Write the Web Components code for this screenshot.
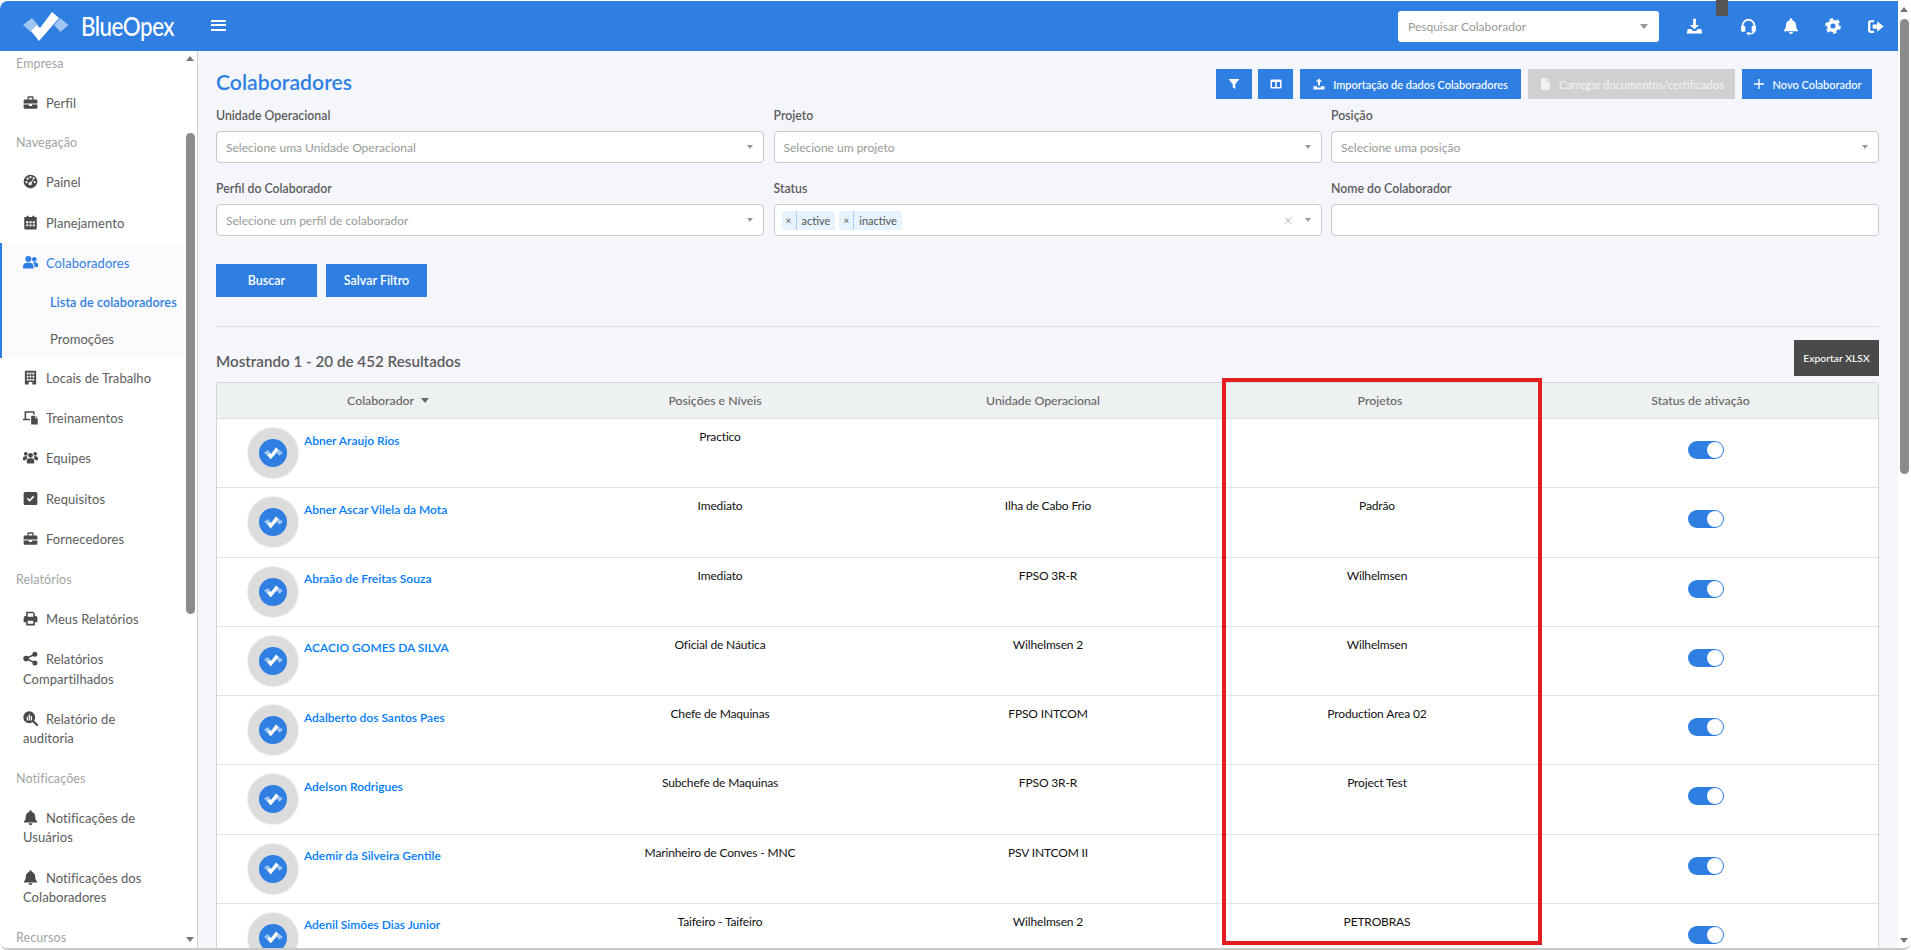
<!DOCTYPE html>
<html lang="pt-BR">
<head>
<meta charset="utf-8">
<title>Colaboradores</title>
<style>
  html, body { margin: 0; height: 100%; overflow: hidden; background: #fff; }
  body { font-family: Lato, "Noto Sans", "Liberation Sans", sans-serif; }
</style>
</head>
<body>
<bo-app></bo-app>
<script>
const BLUE = '#2f7fe3';

const dot = (x, y, r) => `M${x - r} ${y}a${r} ${r} 0 1 0 ${2 * r} 0a${r} ${r} 0 1 0 ${-2 * r} 0z`;

// Icons drawn on a 24x24 grid
const ICONS = {
  briefcase: `<path fill-rule="evenodd" d="M9 2h6a2 2 0 0 1 2 2v3h4a2 2 0 0 1 2 2v4.5H1V9a2 2 0 0 1 2-2h4V4a2 2 0 0 1 2-2zm0 2.5V7h6V4.5H9zM1 15h8.5v2.5h5V15H23v5a2 2 0 0 1-2 2H3a2 2 0 0 1-2-2z"/>`,
  gauge: `<path fill-rule="evenodd" d="${dot(12, 12, 11)}${dot(5.5, 13, 1.7)}${dot(7.5, 7.5, 1.7)}${dot(12, 5, 1.7)}${dot(17, 7, 1.7)}${dot(18.5, 13, 1.7)}${dot(11.5, 15.5, 2.6)}"/><path d="M12 15l4-6" stroke="#fff" stroke-width="1.6"/>`,
  calendar: `<path fill-rule="evenodd" d="M6 1h3v2h6V1h3v2h3a1 1 0 0 1 1 1v17a2 2 0 0 1-2 2H4a2 2 0 0 1-2-2V4a1 1 0 0 1 1-1h3zM5 10v3h3.5v-3zm5.2 0v3h3.6v-3zm5.3 0v3H19v-3zM5 15v3h3.5v-3zm5.2 0v3h3.6v-3zm5.3 0v3H19v-3z"/>`,
  friends: `<circle cx="8.5" cy="6.5" r="4.8"/><path d="M0 21.5V19c0-4 3-6.5 6-6.5h5c3 0 6 2.500 6 6.500v2.500z"/><circle cx="18" cy="6.800" r="3.800"/><path d="M15.500 12c1-.4 2-.4 3.500-.4 3 0 5.500 2 5.500 5.400v2h-6c0-3-1-5.500-3-7z"/>`,
  building: `<path fill-rule="evenodd" d="M4 1h16a1 1 0 0 1 1 1v21h-6v-4H9v4H3V2a1 1 0 0 1 1-1zM6 4v3h3V4zm4.500 0v3h3V4zM15 4v3h3V4zM6 9v3h3V9zm4.500 0v3h3V9zM15 9v3h3V9zM6 14v3h3v-3zm4.500 0v3h3v-3zM15 14v3h3v-3z"/>`,
  laptopfile: `<path d="M3 2h14a1.500 1.500 0 0 1 1.500 1.500V7H16V4.500H5V14h6v2.500H0V15a1 1 0 0 1 1-1h1.500V3.500A1.500 1.500 0 0 1 3 2z"/><path d="M13 9h6v4h4.500v10H13zM20 9l3.500 3H20z"/>`,
  users: `<circle cx="12" cy="8.500" r="3.800"/><circle cx="4.500" cy="6" r="3"/><circle cx="19.500" cy="6" r="3"/><path d="M6 20v-3c0-2.500 2-4 4-4h4c2 0 4 1.500 4 4v3a1.500 1.500 0 0 1-1.500 1.500h-9A1.500 1.500 0 0 1 6 20z"/><path d="M0 15v-2c0-1.500 1.500-3 3-3h3c.3 0 .5 0 .8.200-.5 1-.3 2 .200 2.800-1.500.8-2.500 2-3 3.500H1a1 1 0 0 1-1-1.500zM24 15v-2c0-1.500-1.500-3-3-3h-3l-.8.200c.5 1 .3 2-.200 2.800 1.500.8 2.500 2 3 3.500h3a1 1 0 0 0 1-1.500z"/>`,
  check: `<path fill-rule="evenodd" d="M3.500 1.500h17a2.500 2.500 0 0 1 2.500 2.500v16a2.500 2.500 0 0 1-2.500 2.500h-17A2.500 2.500 0 0 1 1 20V4a2.500 2.500 0 0 1 2.500-2.500zM6 12.500l1.800-1.800 2.700 2.700 5.700-5.700 1.800 1.800-7.500 7.500z"/>`,
  print: `<path fill-rule="evenodd" d="M5 1h11l3 3v4h1a3 3 0 0 1 3 3v7h-4v5H5v-5H1v-7a3 3 0 0 1 3-3h1zm2.500 2.500V9h9V3.500zM7.500 15.500V20.500h9v-5z"/>`,
  share: `<circle cx="5" cy="12" r="4.500"/><circle cx="19" cy="5" r="4"/><circle cx="19" cy="19" r="4"/><path d="M19 5L5 12l14 7" fill="none" stroke="currentColor" stroke-width="2.500"/>`,
  audit: `<path fill-rule="evenodd" d="${dot(10, 10, 9.500)}M6 9h2v6H6zM9.200 5.500h2V15h-2zM12.500 8h2v7h-2z"/><path d="M16 16l6.500 6.500" stroke="currentColor" stroke-width="3.500" stroke-linecap="round"/>`,
  bell: `<path d="M12 .5a2 2 0 0 0-2 2v.7C6.500 4 4.500 7 4.500 10.500c0 5-1.700 6.500-3 7.800V20h21v-1.700c-1.300-1.300-3-2.800-3-7.800 0-3.500-2-6.500-5.500-7.300v-.7a2 2 0 0 0-2-2zM9 21h6a3 3 0 0 1-6 0z"/>`,
  download: `<path d="M10 1h4v9h4.500L12 16 5.500 10H10z"/><path d="M2.500 15.500H7l3 3h4l3-3h4.500L23 22H1z"/>`,
  headset: `<path d="M3.500 14V11a8.500 8.500 0 0 1 17 0v3" fill="none" stroke="currentColor" stroke-width="2.600"/><rect x="1.500" y="11" width="6" height="8.500" rx="2"/><rect x="16.500" y="11" width="6" height="8.500" rx="2"/><path d="M20 18c0 3-2 4-4.500 4H11" fill="none" stroke="currentColor" stroke-width="2"/><rect x="9.500" y="20" width="5" height="3.500" rx="1.700"/>`,
  gear: `<circle cx="12" cy="12" r="6.500" fill="none" stroke="currentColor" stroke-width="5.400"/><circle cx="12" cy="12" r="10" fill="none" stroke="currentColor" stroke-width="3.600" stroke-dasharray="5.200 5.270"/>`,
  signout: `<path d="M10 3H5a3.500 3.500 0 0 0-3.500 3.500v11A3.500 3.500 0 0 0 5 21h5v-3H5.500a.8.800 0 0 1-.8-.800V6.800a.8.800 0 0 1 .8-.800H10z"/><path d="M14.500 4.500L23.500 12l-9 7.500V15H8V9h6.500z"/>`,
  filter: `<path d="M1 2h22l-8.500 10.500V22l-5-3.500v-6z"/>`,
  columns: `<path fill-rule="evenodd" d="M2.500 3h19A1.500 1.500 0 0 1 23 4.500v15a1.500 1.500 0 0 1-1.500 1.500h-19A1.500 1.500 0 0 1 1 19.500v-15A1.500 1.500 0 0 1 2.500 3zM4 8v10h6.500V8zm9.500 0v10H20V8z"/>`,
  upload: `<path d="M10 15V7.500H5.500L12 1l6.500 6.500H14V15z"/><path d="M1 16.500h7v.8a1.700 1.700 0 0 0 1.700 1.700h4.600a1.700 1.700 0 0 0 1.700-1.700v-.8h7V23H1z"/>`,
  file: `<path d="M4 0h10v7h7v15.500a1.500 1.500 0 0 1-1.500 1.500h-14A1.500 1.500 0 0 1 4 22.500z"/><path d="M16 0l5 5h-5z"/>`,
  plus: `<path d="M12 2v20M2 12h20" fill="none" stroke="currentColor" stroke-width="2.600"/>`
};

class BoIcon extends HTMLElement {
  connectedCallback() {
    const size = this.getAttribute('size') || 14;
    this.attachShadow({ mode: 'open' }).innerHTML = `
      <style>
        :host { display: inline-flex; flex: none; color: inherit; }
        svg { display: block; fill: currentColor; }
      </style>
      <svg width="${size}" height="${size}" viewBox="0 0 24 24">${ICONS[this.getAttribute('name')] || ''}</svg>`;
  }
}

class BoLogoMark extends HTMLElement {
  connectedCallback() {
    const width = this.getAttribute('width') || 46;
    this.attachShadow({ mode: 'open' }).innerHTML = `
      <style>:host { display: inline-flex; flex: none; }</style>
      <svg width="${width}" viewBox="0 0 46 31">
        <path fill="#fff" opacity=".55" d="M0 14l9-7 6 7-7 7zM31 14l6-7 8.500 7-8 7z"/>
        <path fill="#fff" d="M8 20l6-6 3 3L29 1l7 6-20 23z"/>
      </svg>`;
  }
}

class BoHeader extends HTMLElement {
  connectedCallback() {
    this.attachShadow({ mode: 'open' }).innerHTML = `
      <style>
        :host {
          display: flex; align-items: center; height: 50px; background: ${BLUE}; color: #fff;
          border-top-left-radius: 8px; margin-top: 1px; position: relative;
        }
        .logo { display: flex; align-items: center; width: 211px; padding-left: 23px; box-sizing: border-box; }
        .name { display: inline-block; font: 500 26px Lato, sans-serif; letter-spacing: -.6px; margin-left: 12px; transform: scaleX(.86); transform-origin: left center; }
        .burger { width: 15px; height: 11px; border-top: 2px solid #fff; border-bottom: 2px solid #fff; position: relative; box-sizing: border-box; margin-top: -2px; }
        .burger::after { content: ""; position: absolute; left: 0; right: 0; top: 2.500px; height: 2px; background: #fff; }
        .search {
          margin-left: auto; width: 261px; height: 31px; background: #fff; border-radius: 3px; box-sizing: border-box; flex: none;
          display: flex; align-items: center; padding: 0 11px 0 10px; color: #999; font-size: 12px; margin-top: 1px;
        }
        .search i { margin-left: auto; border: 4px solid transparent; border-top: 5px solid #999; border-bottom: 0; }
        .icons { display: flex; align-items: center; gap: 26px; margin: 0 14px 0 27px; }
        .icons bo-icon:first-child { margin-right: 11px; }
        .tab { position: absolute; left: 1716px; top: -1px; width: 12px; height: 16px; background: #555; border-radius: 0 0 2px 2px; }
      </style>
      <div class="logo"><bo-logo-mark></bo-logo-mark><span class="name">BlueOpex</span></div>
      <div class="burger"></div>
      <div class="search"><span>Pesquisar Colaborador</span><i></i></div>
      <div class="icons">
        <bo-icon name="download" size="17"></bo-icon>
        <bo-icon name="headset" size="17"></bo-icon>
        <bo-icon name="bell" size="16"></bo-icon>
        <bo-icon name="gear" size="16"></bo-icon>
        <bo-icon name="signout" size="17"></bo-icon>
      </div>
      <div class="tab"></div>`;
  }
}

class BoNavTitle extends HTMLElement {
  connectedCallback() {
    this.attachShadow({ mode: 'open' }).innerHTML = `
      <style>
        :host { display: flex; align-items: center; height: 39px; padding-left: 16px; color: #a3a3a3; font-size: 12.500px; letter-spacing: .1px; }
      </style>
      <slot></slot>`;
  }
}

class BoNavItem extends HTMLElement {
  connectedCallback() {
    const active = this.hasAttribute('active');
    const sub = this.hasAttribute('sub');
    this.attachShadow({ mode: 'open' }).innerHTML = `
      <style>
        :host { display: block; padding: ${sub ? '8.850px 0 8.850px 48px' : '10.600px 24px 10.600px 23px'}; line-height: 19.300px; font-size: ${sub && active ? '12.700px' : '13px'}; color: ${active ? BLUE : '#5c5c5c'}; letter-spacing: .05px; white-space: ${sub ? 'nowrap' : 'normal'}; ${sub && active ? 'font-weight: 600;' : ''} }
        bo-icon { vertical-align: -2px; margin-right: 8px; color: ${active ? BLUE : '#4a4a4a'}; }
      </style>
      ${this.getAttribute('icon') ? `<bo-icon name="${this.getAttribute('icon')}" size="15"></bo-icon>` : ''}<slot></slot>`;
  }
}

class BoSidebar extends HTMLElement {
  connectedCallback() {
    this.attachShadow({ mode: 'open' }).innerHTML = `
      <style>
        :host { display: flex; width: 198px; flex: none; box-sizing: border-box; background: #fff; border-right: 1px solid #cfd2d6; position: relative; overflow: hidden; }
        .list { width: 183px; flex: none; margin-top: -7px; height: 906px; overflow: hidden; }
        .group { border-left: 2px solid ${BLUE}; background: #fbfbfd; }
        .group bo-nav-item:first-child { margin-left: -2px; }
        .bar { flex: 1; position: relative; }
        .up, .down { position: absolute; left: 3px; border: 4px solid transparent; border-left-width: 4.500px; border-right-width: 4.500px; }
        .up { top: 5px; border-bottom: 5px solid #777; border-top: 0; }
        .down { bottom: 6px; border-top: 5px solid #777; border-bottom: 0; }
        .thumb { position: absolute; left: 3px; top: 82px; width: 9px; height: 481px; background: #8c8c8c; border-radius: 5px; }
      </style>
      <div class="list">
        <bo-nav-title>Empresa</bo-nav-title>
        <bo-nav-item icon="briefcase">Perfil</bo-nav-item>
        <bo-nav-title>Navegação</bo-nav-title>
        <bo-nav-item icon="gauge">Painel</bo-nav-item>
        <bo-nav-item icon="calendar">Planejamento</bo-nav-item>
        <div class="group">
          <bo-nav-item icon="friends" active>Colaboradores</bo-nav-item>
          <bo-nav-item sub active>Lista de colaboradores</bo-nav-item>
          <bo-nav-item sub>Promoções</bo-nav-item>
        </div>
        <bo-nav-item icon="building">Locais de Trabalho</bo-nav-item>
        <bo-nav-item icon="laptopfile">Treinamentos</bo-nav-item>
        <bo-nav-item icon="users">Equipes</bo-nav-item>
        <bo-nav-item icon="check">Requisitos</bo-nav-item>
        <bo-nav-item icon="briefcase">Fornecedores</bo-nav-item>
        <bo-nav-title>Relatórios</bo-nav-title>
        <bo-nav-item icon="print">Meus Relatórios</bo-nav-item>
        <bo-nav-item icon="share">Relatórios Compartilhados</bo-nav-item>
        <bo-nav-item icon="audit">Relatório de auditoria</bo-nav-item>
        <bo-nav-title>Notificações</bo-nav-title>
        <bo-nav-item icon="bell">Notificações de Usuários</bo-nav-item>
        <bo-nav-item icon="bell">Notificações dos Colaboradores</bo-nav-item>
        <bo-nav-title>Recursos</bo-nav-title>
      </div>
      <div class="bar"><div class="up"></div><div class="thumb"></div><div class="down"></div></div>`;
  }
}

class BoButton extends HTMLElement {
  connectedCallback() {
    const icon = this.getAttribute('icon');
    const variant = this.getAttribute('variant') || 'primary';
    const bg = { primary: BLUE, disabled: '#d0d0d0', dark: '#4a4a4b' }[variant];
    const color = variant === 'disabled' ? '#f2f2f2' : '#fff';
    this.attachShadow({ mode: 'open' }).innerHTML = `
      <style>
        :host { display: inline-flex; align-items: center; justify-content: center; gap: 8px; height: var(--h, 30px); width: var(--w, auto); padding: var(--pad, 0); box-sizing: border-box; background: ${bg}; color: ${color}; font-size: var(--fs, 11px); font-weight: var(--fw, 500); flex: none; white-space: nowrap; }
      </style>
      ${icon ? `<bo-icon name="${icon}" size="${this.getAttribute('size') || 12}"></bo-icon>` : ''}<slot></slot>`;
  }
}

class BoField extends HTMLElement {
  connectedCallback() {
    const label = this.getAttribute('label');
    const placeholder = this.getAttribute('placeholder');
    const chips = (this.getAttribute('chips') || '').split(',').filter(Boolean);
    const bare = this.hasAttribute('bare');
    const chipHtml = chips.map(c => `<span class="chip"><b>×</b><span>${c}</span></span>`).join('');
    this.attachShadow({ mode: 'open' }).innerHTML = `
      <style>
        :host { display: block; min-width: 0; }
        label { display: block; font-size: 12.300px; font-weight: 600; color: #5c5c5c; line-height: 17px; margin-bottom: 7.500px; }
        .box { height: 32px; box-sizing: border-box; background: #fff; border: 1px solid #c9c9c9; border-radius: 4px; display: flex; align-items: center; padding: 0 7px 0 9px; color: #999; font-size: 12px; }
        .chips { display: flex; gap: 4px; margin-left: -2px; margin-top: 1px; }
        .chip { display: flex; height: 19px; background: #e7f3ff; border-radius: 2px; color: #555; font-size: 11px; align-items: center; }
        .chip b { font-weight: 400; width: 14px; text-align: center; border-right: 1px solid #a9d0f5; line-height: 19px; font-size: 10px; }
        .chip span { padding: 0 5px 0 5px; }
        .clear { margin-left: auto; margin-right: 12px; color: #999; font-size: 15px; font-weight: 300; }
        i { border: 3.500px solid transparent; border-top: 4px solid #999; border-bottom: 0; margin-left: auto; margin-right: 3px; }
        .clear + i { margin-left: 0; }
      </style>
      <label>${label}</label>
      <div class="box">${bare ? '' : chips.length ? `<div class="chips">${chipHtml}</div><span class="clear">×</span><i></i>` : `<span>${placeholder}</span><i></i>`}</div>`;
  }
}

class BoToolbar extends HTMLElement {
  connectedCallback() {
    this.attachShadow({ mode: 'open' }).innerHTML = `
      <style>
        :host { display: flex; align-items: center; gap: 7px; padding: 18px 7px 0 0; }
        h1 { margin: -5px auto 0 0; font-size: 21.200px; font-weight: 600; color: ${BLUE}; line-height: 30px; }
      </style>
      <h1>Colaboradores</h1>
      <bo-button icon="filter" style="--w:36px;margin-right:-1px"></bo-button>
      <bo-button icon="columns" style="--w:35px"></bo-button>
      <bo-button icon="upload" style="--w:221px">Importação de dados Colaboradores</bo-button>
      <bo-button icon="file" variant="disabled" style="--w:207px">Carregar documentos/certificados</bo-button>
      <bo-button icon="plus" style="--w:130px">Novo Colaborador</bo-button>`;
  }
}

class BoFilters extends HTMLElement {
  connectedCallback() {
    this.attachShadow({ mode: 'open' }).innerHTML = `
      <style>
        :host { display: grid; grid-template-columns: repeat(3, 1fr); column-gap: 9.500px; row-gap: 16.500px; margin-top: 7.500px; }
      </style>
      <bo-field label="Unidade Operacional" placeholder="Selecione uma Unidade Operacional"></bo-field>
      <bo-field label="Projeto" placeholder="Selecione um projeto"></bo-field>
      <bo-field label="Posição" placeholder="Selecione uma posição"></bo-field>
      <bo-field label="Perfil do Colaborador" placeholder="Selecione um perfil de colaborador"></bo-field>
      <bo-field label="Status" chips="active,inactive"></bo-field>
      <bo-field label="Nome do Colaborador" bare></bo-field>`;
  }
}

class BoRow extends HTMLElement {
  connectedCallback() {
    const [name, position, unit, project] = JSON.parse(this.getAttribute('data'));
    this.attachShadow({ mode: 'open' }).innerHTML = `
      <style>
        :host { display: grid; grid-template-columns: var(--cols); height: 69.250px; box-sizing: border-box; border-top: 1px solid #dfe1e3; background: #fff; font-size: 12px; letter-spacing: -.15px; color: #111; }
        .who { display: flex; padding-left: 31px; }
        .avatar { width: 50px; height: 50px; margin-top: 9px; border-radius: 50%; background: #dcdcdc; box-shadow: 0 0 0 1px #eee; display: flex; align-items: center; justify-content: center; flex: none; }
        .avatar div { width: 28px; height: 28px; border-radius: 50%; background: ${BLUE}; display: flex; align-items: center; justify-content: center; }
        a { color: #007bff; font-weight: 600; margin: 12.500px 0 0 6px; line-height: 18px; white-space: nowrap; letter-spacing: 0; }
        .cell { text-align: center; padding-top: 9px; line-height: 18px; }
        .c2, .c3 { padding-left: 10px; }
        .c4 { padding-right: 6px; }
        .toggle { justify-self: center; margin: 22px 0 0 10px; width: 36px; height: 18px; border-radius: 9px; background: ${BLUE}; position: relative; }
        .toggle::after { content: ""; position: absolute; right: 1px; top: 1px; width: 16px; height: 16px; border-radius: 50%; background: #fff; }
      </style>
      <div class="who"><div class="avatar"><div><bo-logo-mark width="19"></bo-logo-mark></div></div><a>${name}</a></div>
      <div class="cell c2">${position}</div>
      <div class="cell c3">${unit}</div>
      <div class="cell c4">${project}</div>
      <div class="toggle"></div>`;
  }
}

class BoTable extends HTMLElement {
  connectedCallback() {
    const rows = [
      ['Abner Araujo Rios', 'Practico', '', ''],
      ['Abner Ascar Vilela da Mota', 'Imediato', 'Ilha de Cabo Frio', 'Padrão'],
      ['Abraão de Freitas Souza', 'Imediato', 'FPSO 3R-R', 'Wilhelmsen'],
      ['ACACIO GOMES DA SILVA', 'Oficial de Náutica', 'Wilhelmsen 2', 'Wilhelmsen'],
      ['Adalberto dos Santos Paes', 'Chefe de Maquinas', 'FPSO INTCOM', 'Production Area 02'],
      ['Adelson Rodrigues', 'Subchefe de Maquinas', 'FPSO 3R-R', 'Project Test'],
      ['Ademir da Silveira Gentile', 'Marinheiro de Conves - MNC', 'PSV INTCOM II', ''],
      ['Adenil Simões Dias Junior', 'Taifeiro - Taifeiro', 'Wilhelmsen 2', 'PETROBRAS']
    ];
    this.attachShadow({ mode: 'open' }).innerHTML = `
      <style>
        :host { display: block; --cols: 364px 268px 388px 286px 1fr; border: 1px solid #d3d6d9; border-bottom: 0; border-radius: 4px 4px 0 0; margin-top: 6px; }
        .head { display: grid; grid-template-columns: var(--cols); height: 35px; align-items: center; background: #eef1f2; color: #666; font-size: 12.300px; font-weight: 500; text-align: center; border-radius: 4px 4px 0 0; }
        .head div:first-child { padding-right: 22px; }
        .head i { display: inline-block; vertical-align: 2px; margin-left: 4px; border: 4px solid transparent; border-top: 5px solid #666; border-bottom: 0; }
      </style>
      <div class="head">
        <div>Colaborador <i></i></div><div>Posições e Níveis</div><div>Unidade Operacional</div><div>Projetos</div><div>Status de ativação</div>
      </div>
      ${rows.map(r => `<bo-row data='${JSON.stringify(r)}'></bo-row>`).join('')}`;
  }
}

class BoMain extends HTMLElement {
  connectedCallback() {
    this.attachShadow({ mode: 'open' }).innerHTML = `
      <style>
        :host { display: block; flex: 1; min-width: 0; background: #f5f6fb; box-sizing: border-box; padding: 0 19px 0 18px; overflow: hidden; position: relative; }
        .actions { display: flex; gap: 9px; margin-top: 28px; }
        .actions bo-button { --w: 101px; --h: 33px; --fs: 12.500px; --fw: 600; }
        hr { border: 0; border-top: 1px solid #dcdee2; margin: 29px 0 0; }
        .results { display: flex; align-items: flex-end; justify-content: space-between; margin-top: 13px; }
        h2 { margin: 0 0 5px; font-size: 15.200px; font-weight: 600; color: #5c5c5c; line-height: 20px; }
        .results bo-button { --w: 85px; --h: 36px; --fs: 10.400px; }
        .mark { position: absolute; left: 1024px; top: 327px; width: 320px; height: 567px; box-sizing: border-box; border: 4px solid #e41e20; pointer-events: none; }
      </style>
      <bo-toolbar></bo-toolbar>
      <bo-filters></bo-filters>
      <div class="actions"><bo-button>Buscar</bo-button><bo-button>Salvar Filtro</bo-button></div>
      <hr>
      <div class="results"><h2>Mostrando 1 - 20 de 452 Resultados</h2><bo-button variant="dark">Exportar XLSX</bo-button></div>
      <bo-table></bo-table>
      <div class="mark"></div>`;
  }
}

class BoApp extends HTMLElement {
  connectedCallback() {
    this.attachShadow({ mode: 'open' }).innerHTML = `
      <style>
        :host { display: flex; height: 950px; overflow: hidden; box-sizing: border-box; border-bottom: 2px solid #c9c9c9; border-radius: 8px; background: #fff; }
        .page { width: 1898px; flex: none; display: flex; flex-direction: column; }
        .body { display: flex; flex: 1; min-height: 0; }
        .scroll { flex: 1; position: relative; }
        .scroll div { position: absolute; }
        .thumb { left: 2px; top: 19px; width: 9px; height: 455px; background: #8c8c8c; border-radius: 5px; }
        .up { left: 2px; top: 7px; border: 4.500px solid transparent; border-bottom: 5px solid #777; border-top: 0; }
        .down { left: 2px; bottom: 5px; border: 4.500px solid transparent; border-top: 5px solid #777; border-bottom: 0; }
      </style>
      <div class="page">
        <bo-header></bo-header>
        <div class="body"><bo-sidebar></bo-sidebar><bo-main></bo-main></div>
      </div>
      <div class="scroll"><div class="up"></div><div class="thumb"></div><div class="down"></div></div>`;
  }
}

customElements.define('bo-icon', BoIcon);
customElements.define('bo-logo-mark', BoLogoMark);
customElements.define('bo-button', BoButton);
customElements.define('bo-nav-title', BoNavTitle);
customElements.define('bo-nav-item', BoNavItem);
customElements.define('bo-header', BoHeader);
customElements.define('bo-sidebar', BoSidebar);
customElements.define('bo-field', BoField);
customElements.define('bo-toolbar', BoToolbar);
customElements.define('bo-filters', BoFilters);
customElements.define('bo-row', BoRow);
customElements.define('bo-table', BoTable);
customElements.define('bo-main', BoMain);
customElements.define('bo-app', BoApp);
</script>
</body>
</html>
